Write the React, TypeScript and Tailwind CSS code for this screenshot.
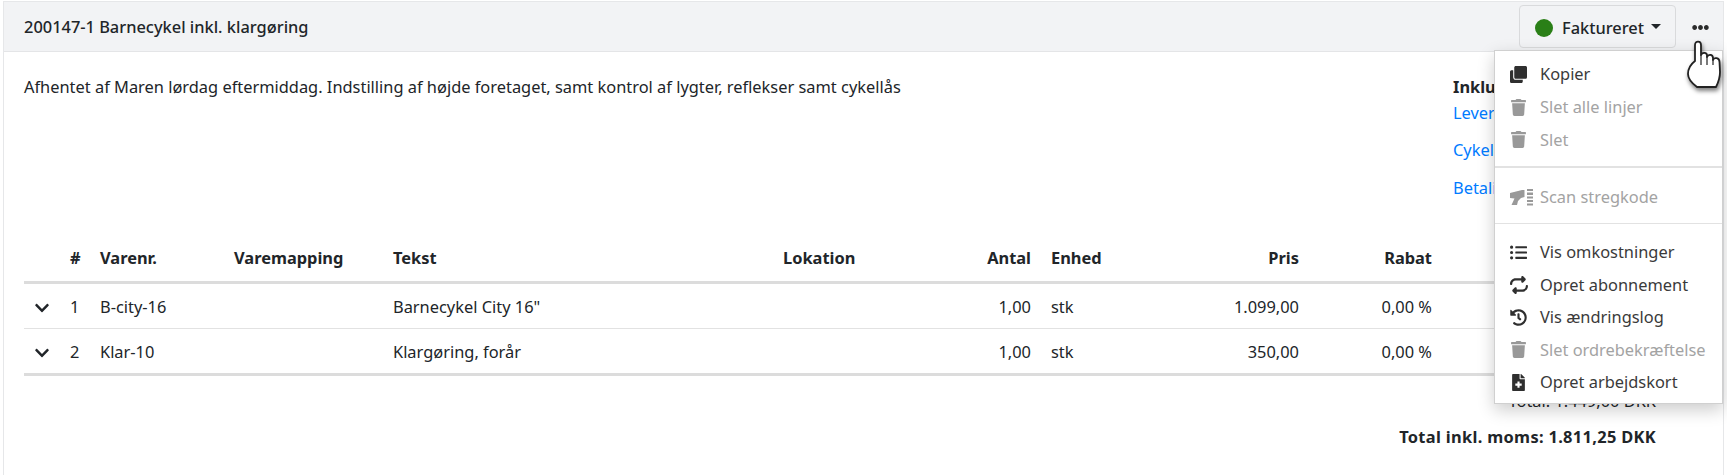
import { FaClone, FaTrash, FaListUl, FaHistory, FaFileMedical, FaChevronDown, FaEllipsisH } from 'react-icons/fa';
import { FaRepeat } from 'react-icons/fa6';

const rows = [
  { n: 1, sku: 'B-city-16', text: 'Barnecykel City 16"', qty: '1,00', unit: 'stk', price: '1.099,00', disc: '0,00 %' },
  { n: 2, sku: 'Klar-10', text: 'Klargøring, forår', qty: '1,00', unit: 'stk', price: '350,00', disc: '0,00 %' },
];

const ScanIcon = () => (
  <svg viewBox="0 0 23 17" className="w-[23px] h-[17px]" fill="currentColor">
    <path d="M0 4 L12 1 L14.5 1 L14.5 8 L11 9 L8 12 L7 16 L1.5 16 L4.5 9.5 L0 9 Z" />
    <rect x="17" y="0" width="6" height="2" />
    <rect x="17" y="3.5" width="6" height="2.5" />
    <rect x="17" y="7.5" width="6" height="2" />
    <rect x="17" y="11" width="6" height="2" />
    <rect x="17" y="14.5" width="6" height="2" />
  </svg>
);

const HandCursor = () => (
  <svg viewBox="0 0 34 49" className="w-[34px] h-[49px] drop-shadow-[1px_3px_2px_rgba(0,0,0,0.5)]">
    <path
      d="M8 5 C8 0.5 14 0.5 14 5 L14 15 C15 12 20 12 20 15.5 L20 17 C21 14 26 14 26 18 L26 20 C27 17 32.5 17.5 32.5 22 L33 32 C33 38 31 43 29 47 L10 47 C6 44 1 39 1 34 C1 29 4 24 8 21 Z"
      fill="#fff"
      stroke="#222"
      strokeWidth="1.8"
      strokeLinejoin="round"
    />
    <path d="M14 15 L14 25 M20 16 L20 25 M26 19 L26 25" stroke="#222" strokeWidth="1.2" fill="none" />
  </svg>
);

const MenuItem = ({ icon, label, disabled }: { icon: React.ReactNode; label: string; disabled?: boolean }) => (
  <div className={`flex items-center h-[32.4px] pl-[15px] ${disabled ? 'text-[#a3a3a3]' : 'text-[#3a3a3a]'}`}>
    <span className={`w-[30px] flex items-center shrink-0 text-[17px] ${disabled ? 'text-[#999999]' : 'text-[#2f2f2f]'}`}>{icon}</span>
    <span>{label}</span>
  </div>
);

const Th = ({ children, right }: { children?: React.ReactNode; right?: boolean }) => (
  <th className={`px-[10px] h-[52px] align-middle pt-[7px] font-bold border-b-[3px] border-[#dcdcdc] ${right ? 'text-right' : 'text-left'}`}>{children}</th>
);

const Td = ({ children, right }: { children?: React.ReactNode; right?: boolean }) => (
  <td className={`px-[10px] h-[46px] pt-[4px] ${right ? 'text-right' : 'text-left'}`}>{children}</td>
);

export default function App() {
  return (
    <div className="relative w-[1727px] h-[475px] overflow-hidden bg-white font-['Noto_Sans',sans-serif] text-[16.4px] text-[#212529]">
      <div className="ml-[3px] mr-[3px] mt-px h-[480px] border border-[#e6e7e9]">
        <div className="flex items-center justify-between h-[50px] bg-[#f2f3f5] border-b border-[#e4e5e7] pl-5 pr-[14px]">
          <span className="font-medium pt-[2px]">200147-1 Barnecykel inkl. klargøring</span>
          <div className="flex items-center">
            <button className="flex items-center h-[43px] w-[157px] pl-[15px] pt-[3px] border border-[#d9dadc] rounded-[4px] font-medium">
              <span className="w-[18px] h-[18px] rounded-full bg-[#2a7f17] mr-[9px]" />
              Faktureret
              <span className="ml-[7px] mb-[3px] border-x-[5px] border-x-transparent border-t-[5px] border-t-[#212529]" />
            </button>
            <FaEllipsisH className="ml-[16px] mt-[2px] text-[17px] text-[#2b2b2b]" />
          </div>
        </div>

        <div className="flex justify-between pl-5 pt-[23px] h-[178px]">
          <p>Afhentet af Maren lørdag eftermiddag. Indstilling af højde foretaget, samt kontrol af lygter, reflekser samt cykellås</p>
          <div className="w-[270px] shrink-0">
            <div className="font-bold">Inkluderet</div>
            <div className="text-[#007bff] flex flex-col gap-[13px] mt-[1px]">
              <span>Leveringsdato</span>
              <span>Cykelforsikring</span>
              <span>Betalingsmetode</span>
            </div>
          </div>
        </div>

        <table className="table-fixed border-collapse ml-5 w-[1681px]">
          <colgroup>
            <col className="w-[36px]" />
            <col className="w-[30px]" />
            <col className="w-[134px]" />
            <col className="w-[159px]" />
            <col className="w-[390px]" />
            <col className="w-[177px]" />
            <col className="w-[91px]" />
            <col className="w-[109px]" />
            <col className="w-[159px]" />
            <col className="w-[133px]" />
            <col />
          </colgroup>
          <thead>
            <tr>
              <Th />
              <Th>#</Th>
              <Th>Varenr.</Th>
              <Th>Varemapping</Th>
              <Th>Tekst</Th>
              <Th>Lokation</Th>
              <Th right>Antal</Th>
              <Th>Enhed</Th>
              <Th right>Pris</Th>
              <Th right>Rabat</Th>
              <Th />
            </tr>
          </thead>
          <tbody>
            {rows.map((r, i) => (
              <tr key={r.n} className={i === rows.length - 1 ? 'border-b-[3px] border-[#dcdcdc]' : 'border-b border-[#e2e2e2]'}>
                <Td><FaChevronDown className="text-[16px]" /></Td>
                <Td>{r.n}</Td>
                <Td>{r.sku}</Td>
                <Td />
                <Td>{r.text}</Td>
                <Td />
                <Td right>{r.qty}</Td>
                <Td>{r.unit}</Td>
                <Td right>{r.price}</Td>
                <Td right>{r.disc}</Td>
                <Td />
              </tr>
            ))}
          </tbody>
        </table>

        <div className="flex flex-col items-end mt-[13px] pr-[67px]">
          <div>Total: 1.449,00 DKK</div>
          <div className="mt-[12px] font-bold tracking-[0.33px]">Total inkl. moms: 1.811,25 DKK</div>
        </div>
      </div>

      <div className="absolute left-[1494px] top-[50px] w-[229px] h-[354px] bg-white border border-[#d0d0d0] pt-[7px] shadow-[0_6px_16px_rgba(0,0,0,0.2)]">
        <MenuItem icon={<FaClone />} label="Kopier" />
        <div className="pt-px">
          <MenuItem icon={<FaTrash />} label="Slet alle linjer" disabled />
        </div>
        <MenuItem icon={<FaTrash />} label="Slet" disabled />
        <div className="border-t-2 border-[#e2e2e2] mt-[10px] mb-[13px]" />
        <MenuItem icon={<ScanIcon />} label="Scan stregkode" disabled />
        <div className="border-t border-[#e2e2e2] mt-[9px] mb-[13px]" />
        <MenuItem icon={<FaListUl />} label="Vis omkostninger" />
        <MenuItem icon={<FaRepeat className="text-[18px]" />} label="Opret abonnement" />
        <MenuItem icon={<FaHistory />} label="Vis ændringslog" />
        <MenuItem icon={<FaTrash />} label="Slet ordrebekræftelse" disabled />
        <MenuItem icon={<FaFileMedical />} label="Opret arbejdskort" />
      </div>

      <div className="absolute left-[1687px] top-[40px]">
        <HandCursor />
      </div>
    </div>
  );
}
